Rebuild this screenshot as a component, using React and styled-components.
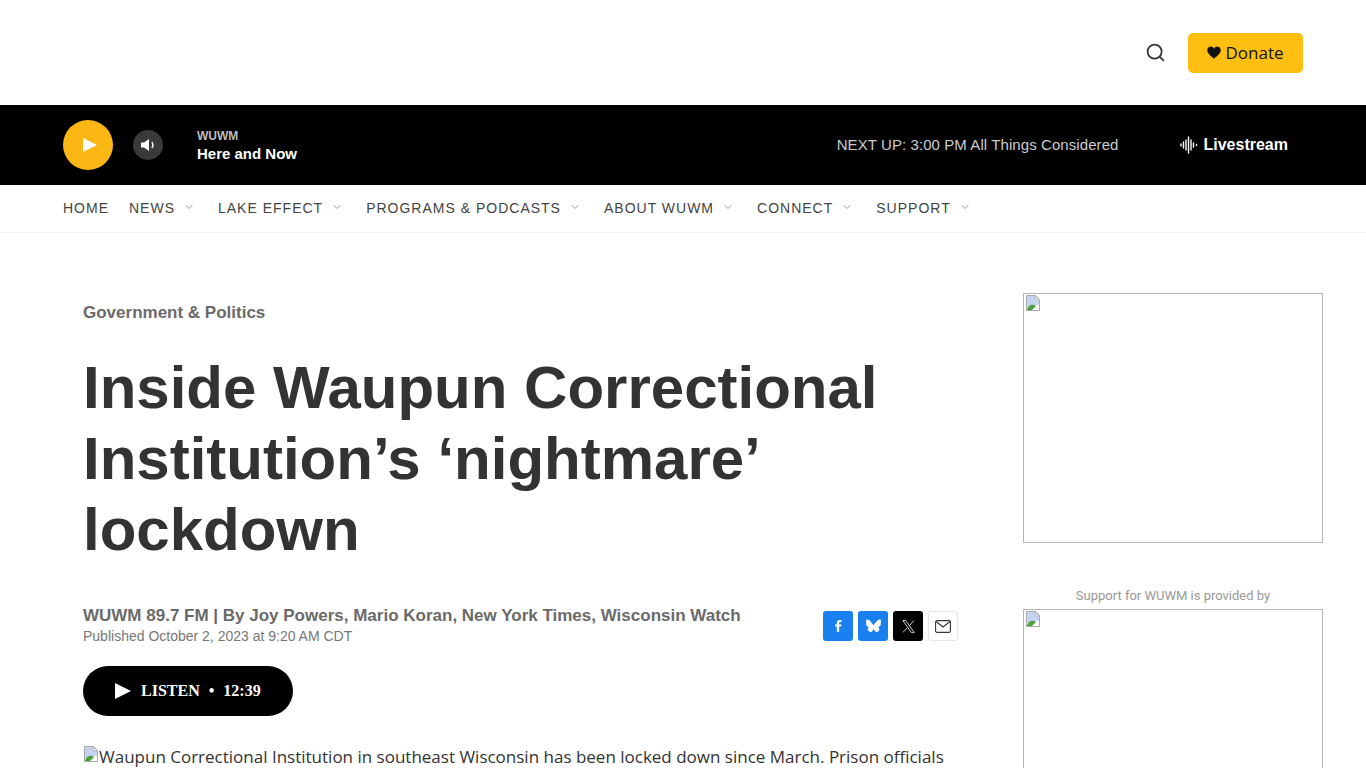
import React from 'react'
import styled, { createGlobalStyle } from 'styled-components'
import { Search, ChevronDown } from 'lucide-react'

const GlobalStyle = createGlobalStyle`
  html, body {
    margin: 0;
    height: 768px;
    overflow: hidden;
    background: #fff;
    font-family: "Liberation Sans", Arial, sans-serif;
  }
`

const TopBar = styled.header`
  height: 105px;
  display: flex;
  align-items: center;
  justify-content: flex-end;
  padding: 0 63px 0 0;
  box-sizing: border-box;
`

const SearchButton = styled.div`
  display: flex;
  color: #333;
  margin-right: 22px;
`

const DonateButton = styled.div`
  width: 115px;
  height: 40px;
  background: #ffbf10;
  border-radius: 5px;
  display: flex;
  align-items: center;
  justify-content: center;
  gap: 4px;
  font: 17px "Open Sans", sans-serif;
  color: #111;
`

const PlayerBar = styled.div`
  height: 80px;
  background: #000;
  display: flex;
  align-items: center;
  padding: 0 78px 0 63px;
`

const PlayCircle = styled.div`
  width: 50px;
  height: 50px;
  border-radius: 50%;
  background: #fdb714;
  display: flex;
  align-items: center;
  justify-content: center;
  padding-left: 3px;
  box-sizing: border-box;
`

const VolumeCircle = styled.div`
  width: 30px;
  height: 30px;
  border-radius: 50%;
  background: #3a3a3a;
  margin-left: 20px;
  display: flex;
  align-items: center;
  justify-content: center;
`

const NowPlaying = styled.div`
  margin-left: 34px;
  padding-top: 2px;
  display: flex;
  flex-direction: column;
  gap: 2px;
`

const Station = styled.div`
  color: #bbb;
  font-size: 12px;
  font-weight: 700;
  line-height: 14px;
`

const Show = styled.div`
  color: #fff;
  font-size: 15px;
  font-weight: 700;
  line-height: 18px;
`

const NextUp = styled.div`
  margin-left: auto;
  color: #ccc;
  font-size: 15px;
  line-height: 18px;
  letter-spacing: 0.08px;
`

const Livestream = styled.div`
  margin-left: 61px;
  display: flex;
  align-items: center;
  gap: 6px;
  color: #fff;
  font-size: 16px;
  font-weight: 700;
`

const Nav = styled.nav`
  height: 48px;
  box-sizing: border-box;
  border-bottom: 1px solid #f0f0f0;
  display: flex;
  align-items: center;
  padding: 0 0 2px 63px;
`

const NavItem = styled.div`
  display: flex;
  align-items: center;
  margin-right: ${p => (p.$plain ? '20px' : '23px')};
  color: #444;
  font-size: 14px;
  letter-spacing: 1px;
  white-space: nowrap;
`

const Caret = styled(ChevronDown)`
  margin-left: 8px;
  color: #777;
  position: relative;
  top: -1px;
`

const Page = styled.main`
  display: flex;
  padding: 60px 43px 0 83px;
`

const Article = styled.article`
  width: 875px;
`

const Category = styled.div`
  color: #6a6a6a;
  font-size: 17px;
  font-weight: 700;
  line-height: 20px;
  margin-top: 10px;
`

const Title = styled.h1`
  margin: 29px 0 0;
  color: #333;
  font-size: 60px;
  font-weight: 700;
  line-height: 71px;
`

const MetaRow = styled.div`
  display: flex;
  justify-content: space-between;
  align-items: center;
  margin-top: 41px;
`

const Byline = styled.div`
  color: #6a6a6a;
  font-size: 17px;
  font-weight: 700;
  line-height: 20px;
`

const Published = styled.div`
  color: #777;
  font-size: 14px;
  line-height: 16px;
  margin-top: 2px;
`

const Share = styled.div`
  display: flex;
  gap: 5px;
  margin-top: 2px;
`

const ShareButton = styled.div`
  width: 30px;
  height: 30px;
  box-sizing: border-box;
  border-radius: 3px;
  background: ${p => p.$bg || '#fff'};
  border: ${p => (p.$outlined ? '1px solid #e6e6e6' : 'none')};
  display: flex;
  align-items: center;
  justify-content: center;
`

const ListenButton = styled.div`
  width: 210px;
  height: 50px;
  margin-top: 22px;
  border-radius: 25px;
  background: #000;
  color: #fff;
  display: flex;
  align-items: center;
  padding-left: 32px;
  box-sizing: border-box;
  font: 700 16px "Liberation Serif", serif;
`

const ListenLabel = styled.span`
  margin-left: 10px;
`

const Dot = styled.span`
  margin: 0 9px;
`

const Caption = styled.div`
  display: flex;
  margin-top: 29px;
  color: #333;
  font: 17px/24px "Open Sans", sans-serif;
  white-space: nowrap;
`

const Sidebar = styled.aside`
  width: 300px;
  margin-left: 65px;
`

const AdSlot = styled.div`
  width: 300px;
  height: 250px;
  box-sizing: border-box;
  border: 1px solid #b5b5b5;
`

const SupportLabel = styled.div`
  margin-top: 45px;
  margin-bottom: 5px;
  text-align: center;
  color: #999;
  font: 13px/16px Roboto, sans-serif;
`

const BrokenIcon = styled.svg`
  display: block;
  flex-shrink: 0;
  width: 16px;
  height: 16px;
  margin: 1px 0 0 ${p => (p.$inset ? '1px' : '0')};
`

const BrokenImage = ({ inset }) => (
  <BrokenIcon $inset={inset} viewBox="0 0 16 16">
    <path d="M1.500 .5h9l4 4v11h-13z" fill="#fff" stroke="#a9a9a9" />
    <path d="M2 1h8v4h4v4.500L2 12z" fill="#c5d3f3" />
    <path d="M2 15c.5-4 5-7 9-4l-4 4z" fill="#4aa03a" />
    <path d="M10 1v4h4z" fill="#eee" stroke="#a9a9a9" strokeWidth=".6" />
  </BrokenIcon>
)

const Waveform = () => (
  <svg width="18" height="18" viewBox="0 0 18 18" stroke="#fff" strokeWidth="1.400" strokeLinecap="round">
    <path d="M1 8v2M3.500 6v6M6 4v10M8.500 1v16M11 4v10M13.500 7v4M16.500 8.500v1" />
  </svg>
)

const navItems = ['NEWS', 'LAKE EFFECT', 'PROGRAMS & PODCASTS', 'ABOUT WUWM', 'CONNECT', 'SUPPORT']

export default function App() {
  return (
    <>
      <GlobalStyle />
      <TopBar>
        <SearchButton>
          <Search size={21} strokeWidth={2} />
        </SearchButton>
        <DonateButton>
          <svg width="14" height="13" viewBox="0 0 24 22">
            <path d="M12 21.500C4 15 .5 11.500.5 7A6 6 0 0 1 12 4.500 6 6 0 0 1 23.500 7c0 4.500-3.500 8-11.500 14.500z" fill="#111" />
          </svg>
          Donate
        </DonateButton>
      </TopBar>
      <PlayerBar>
        <PlayCircle>
          <svg width="16" height="16" viewBox="0 0 16 16">
            <path d="M1 1L15 8 1 15z" fill="#fff" />
          </svg>
        </PlayCircle>
        <VolumeCircle>
          <svg width="16" height="14" viewBox="0 0 16 14" fill="none">
            <path d="M1 4.500h3L9 1v12L4 9.500H1z" fill="#fff" />
            <path d="M12 4c1.200 2 1.200 4 0 6" stroke="#fff" strokeWidth="1.400" />
          </svg>
        </VolumeCircle>
        <NowPlaying>
          <Station>WUWM</Station>
          <Show>Here and Now</Show>
        </NowPlaying>
        <NextUp>NEXT UP: 3:00 PM All Things Considered</NextUp>
        <Livestream>
          <Waveform />
          Livestream
        </Livestream>
      </PlayerBar>
      <Nav>
        <NavItem $plain>HOME</NavItem>
        {navItems.map(label => (
          <NavItem key={label}>
            {label}
            <Caret size={12} strokeWidth={1.5} />
          </NavItem>
        ))}
      </Nav>
      <Page>
        <Article>
          <Category>Government &amp; Politics</Category>
          <Title>
            Inside Waupun Correctional
            <br />
            Institution’s ‘nightmare’
            <br />
            lockdown
          </Title>
          <MetaRow>
            <div>
              <Byline>WUWM 89.7 FM | By Joy Powers, Mario Koran, New York Times, Wisconsin Watch</Byline>
              <Published>Published October 2, 2023 at 9:20 AM CDT</Published>
            </div>
            <Share>
              <ShareButton $bg="#1a80f0">
                <svg width="14" height="14" viewBox="0 0 24 24">
                  <path d="M14 22v-9h3.200l.6-3.700H14V7c0-1 .5-1.800 1.900-1.800H18V2a22 22 0 0 0-3-.2c-3 0-5 1.800-5 5.100v2.400H7V13h3v9z" fill="#fff" />
                </svg>
              </ShareButton>
              <ShareButton $bg="#1a80f0">
                <svg width="15" height="14" viewBox="0 0 64 57">
                  <path d="M14 4c7 5.300 14.700 16 18 21.800C35.300 20 43 9.300 50 4c5-3.800 14-6.700 14 2.600 0 1.900-1.100 15.700-1.700 18-2.200 7.800-10.200 9.800-17.300 8.600 12.400 2.100 15.600 9.100 8.800 16.100-13 13.300-18.600-3.300-20-7.600-.5-1.400-.7-2-1-2-.3 0-.5.600-1 2-1.400 4.300-7 20.900-20 7.600C3.200 42.300 6.400 35.300 18.800 33.200c-7.100 1.200-15.100-.8-17.300-8.600C.9 22.300 0 8.500 0 6.600 0-2.700 8.900.2 14 4z" fill="#fff" />
                </svg>
              </ShareButton>
              <ShareButton $bg="#000">
                <svg width="15" height="15" viewBox="0 0 24 24" fill="none" stroke="#ddd" strokeWidth="1.500">
                  <path d="M3 2.500h4.500L21 21.500h-4.500z" />
                  <path d="M20.500 2.500L13.300 10.800M10.700 13.500L3 21.500" />
                </svg>
              </ShareButton>
              <ShareButton $outlined>
                <svg width="16" height="13" viewBox="0 0 16 13" fill="none" stroke="#333" strokeWidth="1.100">
                  <rect x=".6" y=".6" width="14.800" height="11.800" rx="1.500" />
                  <path d="M1 1.500l7 5.500 7-5.500" />
                </svg>
              </ShareButton>
            </Share>
          </MetaRow>
          <ListenButton>
            <svg width="16" height="16" viewBox="0 0 16 16">
              <path d="M0 0L16 8 0 16z" fill="#fff" />
            </svg>
            <ListenLabel>LISTEN</ListenLabel>
            <Dot>•</Dot>
            12:39
          </ListenButton>
          <Caption>
            <BrokenImage />
            Waupun Correctional Institution in southeast Wisconsin has been locked down since March. Prison officials
          </Caption>
        </Article>
        <Sidebar>
          <AdSlot>
            <BrokenImage inset />
          </AdSlot>
          <SupportLabel>Support for WUWM is provided by</SupportLabel>
          <AdSlot>
            <BrokenImage inset />
          </AdSlot>
        </Sidebar>
      </Page>
    </>
  )
}
